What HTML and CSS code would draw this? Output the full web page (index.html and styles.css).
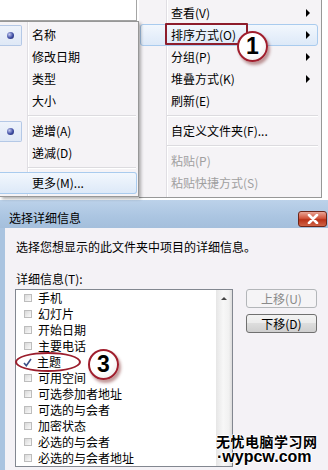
FILE: index.html
```html
<!DOCTYPE html>
<html lang="zh-CN">
<head>
  <meta charset="UTF-8">
  <title>选择详细信息</title>
  <link rel="stylesheet" href="styles.css">
</head>
<body>
  <div class="shot">
    <div class="menus">
      <div class="left-col">
        <div class="pane-top"></div>
        <div class="menu submenu">
          <div class="item"><span class="gutter on"><i class="dot"></i></span><span class="label">名称</span></div>
          <div class="item"><span class="gutter"></span><span class="label">修改日期</span></div>
          <div class="item"><span class="gutter"></span><span class="label">类型</span></div>
          <div class="item"><span class="gutter"></span><span class="label">大小</span></div>
          <div class="sep"></div>
          <div class="item"><span class="gutter on"><i class="dot"></i></span><span class="label">递增(A)</span></div>
          <div class="item"><span class="gutter"></span><span class="label">递减(D)</span></div>
          <div class="sep"></div>
          <div class="item hot"><span class="gutter"></span><span class="label">更多(M)...</span></div>
        </div>
      </div>

      <div class="menu mainmenu">
        <div class="item"><span class="label">查看(V)</span><i class="arrow"></i></div>
        <div class="item hot"><span class="label">排序方式(O)</span><i class="arrow"></i></div>
        <div class="item"><span class="label">分组(P)</span><i class="arrow"></i></div>
        <div class="item"><span class="label">堆叠方式(K)</span><i class="arrow"></i></div>
        <div class="item"><span class="label">刷新(E)</span></div>
        <div class="sep"></div>
        <div class="item"><span class="label">自定义文件夹(F)...</span></div>
        <div class="sep"></div>
        <div class="item disabled"><span class="label">粘贴(P)</span></div>
        <div class="item disabled"><span class="label">粘贴快捷方式(S)</span></div>
      </div>
    </div>

    <div class="dialog">
      <div class="titlebar">
        <span class="title">选择详细信息</span>
        <span class="close">
          <svg width="12" height="10" viewBox="0 0 12 10"><path d="M2 1 L10 9 M10 1 L2 9" stroke="#fff" stroke-width="2.6" stroke-linecap="round"/></svg>
        </span>
      </div>
      <div class="dbody">
        <p class="desc">选择您想显示的此文件夹中项目的详细信息。</p>
        <p class="field">详细信息(T):</p>
        <div class="lrow">
          <div class="list">
            <div class="items">
              <div class="opt"><span class="box"></span>手机</div>
              <div class="opt"><span class="box"></span>幻灯片</div>
              <div class="opt"><span class="box"></span>开始日期</div>
              <div class="opt"><span class="box"></span>主要电话</div>
              <div class="opt"><span class="tick"><svg width="9" height="9" viewBox="0 0 9 9"><path d="M1 5 L3.3 7.6 L8 1" fill="none" stroke="#3b4f87" stroke-width="1.6"/></svg></span>主题</div>
              <div class="opt"><span class="box"></span>可用空间</div>
              <div class="opt"><span class="box"></span>可选参加者地址</div>
              <div class="opt"><span class="box"></span>可选的与会者</div>
              <div class="opt"><span class="box"></span>加密状态</div>
              <div class="opt"><span class="box"></span>必选的与会者</div>
              <div class="opt"><span class="box"></span>必选的与会者地址</div>
            </div>
            <div class="scroll"><span class="up"><i></i></span></div>
          </div>
          <div class="buttons">
            <button class="btn" disabled>上移(U)</button>
            <button class="btn">下移(D)</button>
          </div>
        </div>
      </div>
    </div>

    <!-- annotations drawn over the screenshot -->
    <div class="mark-rect r1"></div>
    <div class="mark-rect r2"></div>
    <div class="mark-ellipse"></div>
    <div class="num n1">1</div>
    <div class="num n2">2</div>
    <div class="num n3">3</div>

    <div class="wm">
      <div class="wm-cn">无忧电脑学习网</div>
      <div class="wm-en">·wypcw.com</div>
    </div>
  </div>
</body>
</html>
```

FILE: styles.css
```css
* {
  box-sizing: border-box;
}
body {
  margin: 0;
  background: #fff;
  font-family: "Noto Sans CJK SC", "Noto Sans", sans-serif;
  font-size: 12px;
  color: #000;
}
.shot {
  position: relative;
  width: 328px;
  height: 470px;
  overflow: hidden;
}

/* context menus */
.menus {
  display: flex;
  align-items: flex-start;
  height: 200px;
  background: #fff;
}
.left-col {
  width: 139px;
  flex: none;
  position: relative;
  z-index: 1;
}
.pane-top {
  height: 21px;
  width: 137px;
  background: #fff;
  border-right: 1px solid #a5a5a5;
  border-bottom: 1px solid #a5a5a5;
}
.menu {
  background-color: #f5f3f6;
  background-image: linear-gradient(to right, transparent 27px, #e0dee3 27px, #e0dee3 28px, #fff 28px, #fff 29px, transparent 29px);
}
.submenu {
  width: 139px;
  border: 1px solid #979797;
  border-left: none;
  padding: 2px 0;
  box-shadow: 2px 2px 3px rgba(0,0,0,0.3);
}
.item {
  height: 22px;
  display: flex;
  align-items: center;
  line-height: 16px;
  white-space: nowrap;
}
.gutter {
  width: 22px;
  height: 21px;
  flex: none;
  display: flex;
  align-items: center;
  justify-content: center;
}
.gutter.on {
  background: linear-gradient(#eef3fb, #dfe8f6);
  border: 1px solid #b4c8e6;
  border-left: none;
  border-radius: 0 2px 2px 0;
}
.dot {
  width: 7px;
  height: 7px;
  border-radius: 50%;
  background: radial-gradient(circle at 35% 35%, #c3caf0, #3d4ca3 55%, #1b245c);
}
.submenu .label {
  margin-left: 10px;
}
.sep {
  height: 8px;
  display: flex;
  align-items: center;
}
.sep::after {
  content: "";
  flex: 1;
  height: 2px;
  margin: 0 2px 0 28px;
  background: linear-gradient(#dcdbdf 50%, #fff 50%);
}
.hot {
  background: linear-gradient(#f2f7fd, #dde9f8);
  border: 1px solid #a9cbee;
}
.submenu .hot {
  border-left: none;
  border-radius: 0 3px 3px 0;
  margin-right: 1px;
}

.mainmenu {
  width: 183px;
  flex: none;
  border-right: 1px solid #979797;
  border-bottom: 1px solid #979797;
  padding: 2px 0 3px;
}
.mainmenu .item {
  margin: 0 3px 0 1px;
  padding: 0 7px 0 30px;
  border: 1px solid transparent;
  border-radius: 3px;
  justify-content: space-between;
}
.mainmenu .item.hot {
  border-color: #a9cbee;
}
.mainmenu .sep::after {
  margin: 0 3px 0 28px;
}
.arrow {
  width: 0;
  height: 0;
  border-left: 4px solid #000;
  border-top: 4px solid transparent;
  border-bottom: 4px solid transparent;
}
.disabled {
  color: #a0a0a0;
}

/* dialog */
.dialog {
  height: 270px;
  display: flex;
  flex-direction: column;
}
.titlebar {
  height: 28px;
  flex: none;
  display: flex;
  justify-content: space-between;
  align-items: flex-start;
  padding-left: 9px;
  background: linear-gradient(#bcd2ea, #abc5e1 60%, #a4bfdc);
}
.title {
  margin-top: 10px;
  line-height: 16px;
}
.close {
  margin-top: 11px;
  margin-right: 1px;
  width: 29px;
  height: 16px;
  border: 1px solid #6e2518;
  border-radius: 3px;
  background: linear-gradient(#e8a597, #d2553c 45%, #b93219 55%, #d06447);
  display: flex;
  align-items: center;
  justify-content: center;
}
.dbody {
  flex: 1;
  background: #f4f2f6;
  border-left: 5px solid #aac4e0;
  padding: 11px 0 0 10px;
}
.desc {
  margin: 0 0 0 1px;
  line-height: 16px;
}
.field {
  margin: 17px 0 4px 1px;
  line-height: 13px;
}
.lrow {
  display: flex;
  align-items: flex-start;
}
.list {
  width: 218px;
  height: 178px;
  border: 1px solid #828790;
  background: #fff;
  display: flex;
}
.items {
  flex: 1;
}
.opt {
  height: 16px;
  display: flex;
  align-items: center;
  padding-left: 8px;
  line-height: 16px;
  white-space: nowrap;
}
.box {
  width: 8px;
  height: 8px;
  margin-right: 6px;
  border: 1px solid #bdbdbd;
  background: linear-gradient(135deg, #d8d8d8, #fbfbfb);
}
.tick {
  width: 9px;
  height: 9px;
  margin: 0 5px 0 -1px;
  display: flex;
}
.scroll {
  width: 16px;
  flex: none;
  background: linear-gradient(to right, #e6e6e6, #f7f7f7 45%, #f1f1f1 80%, #dcdcdc);
}
.up {
  height: 17px;
  display: flex;
  align-items: center;
  justify-content: center;
}
.up i {
  width: 0;
  height: 0;
  border-bottom: 3px solid #444;
  border-left: 3px solid transparent;
  border-right: 3px solid transparent;
}
.buttons {
  margin-left: 13px;
  display: flex;
  flex-direction: column;
  gap: 6px;
}
.btn {
  width: 71px;
  height: 19px;
  padding: 0;
  font-family: "Noto Sans CJK SC", sans-serif;
  font-size: 12px;
  line-height: 16px;
  color: #000;
  border: 1px solid #707070;
  border-radius: 3px;
  background: linear-gradient(#f3f3f3, #ebebeb 50%, #dddddd 50%, #cfcfcf);
}
.btn:disabled {
  color: #8a8a8a;
  border-color: #b3b6b9;
  background: #f5f4f6;
}

/* red annotations */
.mark-rect {
  position: absolute;
  border: 2px solid #8d1d2c;
  border-radius: 1px;
}
.r1 {
  left: 165px;
  top: 23px;
  width: 83px;
  height: 22px;
}
.r2 {
  left: 25px;
  top: 170px;
  width: 74px;
  height: 26px;
}
.mark-ellipse {
  position: absolute;
  left: 15px;
  top: 352px;
  width: 66px;
  height: 20px;
  border: 2px solid #9b1d2c;
  border-radius: 50%;
}
.num {
  position: absolute;
  width: 31px;
  height: 31px;
  border-radius: 50%;
  border: 2px solid #a01e2d;
  background: radial-gradient(circle at 40% 35%, #fff 50%, #e3e3e3);
  box-shadow: 2px 3px 3px rgba(120,30,30,0.45);
  font: bold 23px "Liberation Sans", Arial, sans-serif;
  display: flex;
  align-items: center;
  justify-content: center;
}
.n1 {
  left: 237px;
  top: 31px;
}
.n2 {
  left: 87px;
  top: 151px;
  width: 29px;
  height: 29px;
}
.n3 {
  left: 88px;
  top: 349px;
}

/* watermark */
.wm {
  position: absolute;
  left: 216px;
  top: 433px;
  font-weight: bold;
  text-shadow: 1px 0 #fff, -1px 0 #fff, 0 1px #fff, 0 -1px #fff;
}
.wm-cn {
  font-size: 14px;
  letter-spacing: 0.5px;
  line-height: 16px;
}
.wm-en {
  font-family: "Liberation Sans", Arial, sans-serif;
  font-size: 16px;
  line-height: 15px;
  margin-left: 1px;
}
```
